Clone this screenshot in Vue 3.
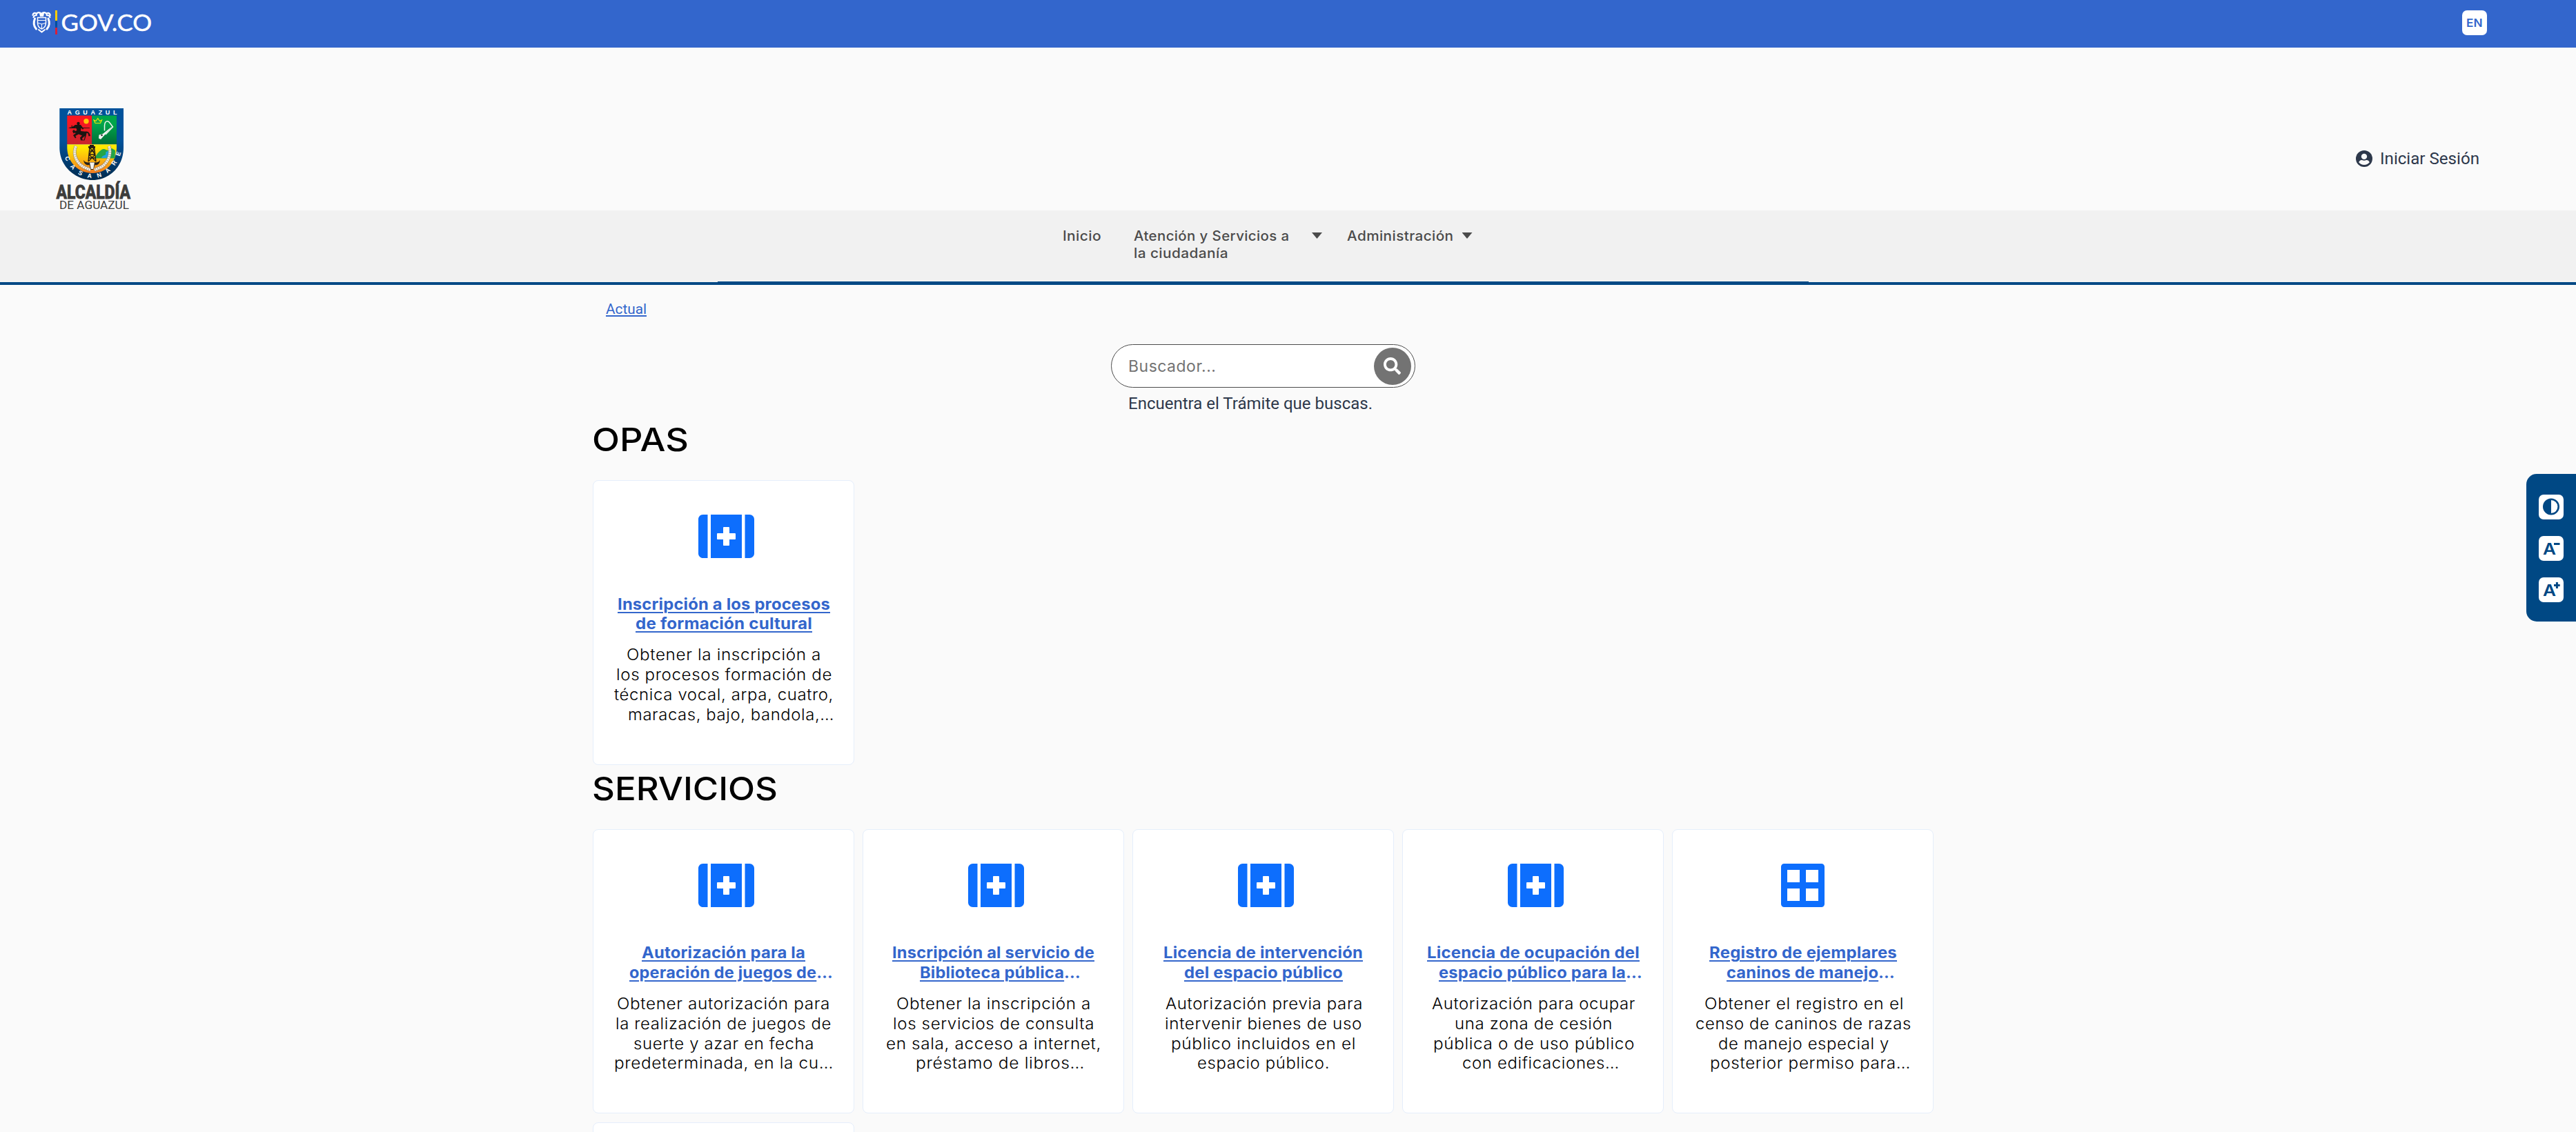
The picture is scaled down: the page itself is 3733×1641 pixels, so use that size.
<script setup>
// Stretches a line of text so that it spans the given width.
const vFit = {
  mounted(el, { value }) {
    el.style.display = 'inline-block'
    const natural = el.getBoundingClientRect().width
    el.style.transformOrigin = 'left'
    el.style.transform = `scaleX(${value / natural})`
  }
}

// Each line: [text, left offset inside the card, width, is truncated]
const opas = [
  {
    icon: 'aid',
    shift: 3.5,
    title: [['Inscripción a los procesos', 34.5, 308], ['de formación cultural', 60.500, 256]],
    body: [
      ['Obtener la inscripción a', 47.7, 282],
      ['los procesos formación de', 32.3, 313],
      ['técnica vocal, arpa, cuatro,', 30.2, 318],
      ['maracas, bajo, bandola,…', 49.3, 299]
    ]
  }
]

const servicios = [
  {
    icon: 'aid',
    shift: 3.5,
    title: [['Autorización para la', 70, 237], ['operación de juegos de', 51.5, 295, true]],
    body: [
      ['Obtener autorización para', 34, 309],
      ['la realización de juegos de', 32, 313],
      ['suerte y azar en fecha', 57.5, 262],
      ['predeterminada, en la cu…', 29.5, 318]
    ]
  },
  {
    icon: 'aid',
    shift: 3.5,
    title: [['Inscripción al servicio de', 41.8, 293], ['Biblioteca pública', 81.6, 233, true]],
    body: [
      ['Obtener la inscripción a', 47.5, 282],
      ['los servicios de consulta', 42.8, 292],
      ['en sala, acceso a internet,', 33, 312],
      ['préstamo de libros…', 76, 245]
    ]
  },
  {
    icon: 'aid',
    shift: 3.5,
    title: [['Licencia de intervención', 44, 289], ['del espacio público', 73.5, 230]],
    body: [
      ['Autorización previa para', 46.4, 286],
      ['intervenir bienes de uso', 45.6, 286],
      ['público incluidos en el', 54.8, 268],
      ['espacio público.', 92.5, 192]
    ]
  },
  {
    icon: 'aid',
    shift: 3.5,
    title: [['Licencia de ocupación del', 35.2, 308], ['espacio público para la', 51.5, 295, true]],
    body: [
      ['Autorización para ocupar', 42, 295],
      ['una zona de cesión', 74.5, 229],
      ['pública o de uso público', 43.4, 292],
      ['con edificaciones…', 85.5, 228]
    ]
  },
  {
    icon: 'grid',
    shift: 0,
    title: [['Registro de ejemplares', 53.2, 272], ['caninos de manejo', 77.3, 244, true]],
    body: [
      ['Obtener el registro en el', 45.4, 289],
      ['censo de caninos de razas', 32.9, 313],
      ['de manejo especial y', 65.6, 248],
      ['posterior permiso para…', 54, 291]
    ]
  }
]

const sections = [
  { name: 'OPAS', width: 140, cards: opas },
  { name: 'SERVICIOS', width: 269, cards: servicios }
]
</script>

<template>
  <div class="page">
    <div class="govbar">
      <svg class="gov" width="180" height="44" viewBox="45 12 180 44">
        <g fill="none" stroke="#fff" stroke-width="2.2" stroke-linecap="round">
          <path d="M60 20C57 17 54 18 53 20C50 18 48 19 47.500 22M60 20C63 17 66 18 67.500 20C70 18 72 19 72.800 22" />
          <path d="M53 22C51 22 49 23 48.500 25M67.500 22C70 22 72 23 72.400 25" />
          <path d="M50.500 27C48 33 49 38 52.500 42M70 27C72.500 33 71.500 38 68 42" stroke-width="3" />
          <path d="M54.500 25.500H66.500V33C66.500 38 63 41 60.500 42C57.500 41 54.500 38 54.500 33Z" stroke-width="1.500" />
          <path d="M55 29.500H66M55.500 33.500L60.500 35L66 33.500M60.500 35V41" stroke-width="1" />
          <path d="M56 43L60.500 46.500L65 43" stroke-width="2" />
        </g>
        <path d="M57 19H64L63 24H58Z" fill="#fff" />
        <path d="M80 15h3v15h-3z" fill="#ffcd00" />
        <path d="M80 30h3v10h-3z" fill="#004f9f" />
        <path d="M80 40h3v10h-3z" fill="#d6203c" />
        <text x="88.500" y="44.500" font-family="Lato, sans-serif" font-weight="400" font-size="33.500" fill="#fff" stroke="#fff" stroke-width=".5" textLength="131.500" lengthAdjust="spacingAndGlyphs">GOV.CO</text>
      </svg>
      <button class="lang"><span v-fit="23.5">EN</span></button>
    </div>

    <header class="head">
      <svg class="crest" width="120" height="165" viewBox="80 150 120 165">
        <defs>
          <linearGradient id="rim" x1="0" y1="0" x2="0" y2="1"><stop offset=".45" stop-color="#00529b" /><stop offset="1" stop-color="#002b4e" /></linearGradient>
          <linearGradient id="red" x1="0" y1="0" x2="0" y2="1"><stop offset=".2" stop-color="#fb1720" /><stop offset="1" stop-color="#c8262e" /></linearGradient>
          <linearGradient id="green" x1="0" y1="0" x2="0" y2="1"><stop offset=".3" stop-color="#00a54b" /><stop offset="1" stop-color="#006c36" /></linearGradient>
          <linearGradient id="gold" x1="0" y1="0" x2="0" y2="1"><stop offset=".1" stop-color="#ffe900" /><stop offset="1" stop-color="#f47b20" /></linearGradient>
          <path id="arc" d="M91.500 220.500C96 242 114 258.300 134 258.300S171 242 176.500 216" />
        </defs>
        <path d="M86.300 157H179V214C179 242 158 261 134 261S86.300 242 86.300 214Z" fill="url(#rim)" />
        <path d="M97.300 167.500H133.300V209.500H97.300Z" fill="url(#red)" />
        <path d="M133.300 167.500H169V209.500H133.300Z" fill="url(#green)" />
        <path d="M97.300 209.500H169V215C168 237 153 251 134 251S98 237 97.300 215Z" fill="url(#gold)" />
        <path d="M97.300 209.500H169" stroke="#f5d34a" stroke-width=".6" />
        <circle cx="125" cy="175.700" r="3.700" fill="#ffc60b" />
        <g fill="#1b1512">
          <circle cx="113.500" cy="179" r="2.200" />
          <path d="M109 181L105 184L104.600 181.500L103.500 182L104 186L110 184.500L111.500 189L109 190L107 188L105 190L106.500 193.500L108 192.500L110 193L106 196L109 200.500L110.500 199.500L109.300 197L114 194.500L119 196.500L116 199.500L117 203.500H120L119 200.500L123 197L122 202L119.500 203.500H122.500L124.500 197.500L125.500 193C128 192 128 196 128.500 197.500L131 197C130 193 128 189.800 123.500 190.700L117 190L117.500 185L120 188L121 186.500L117 181Z" />
          <path d="M99 185.300L102 184.600L130 185.200V186L102 186Z" />
        </g>
        <path d="M136 174L138 178.500H145.500L147.500 174L144.500 175.500L141.800 171.500L139 175.500Z" fill="none" stroke="#e9e50c" stroke-width="1.200" />
        <path d="M151.500 189.500V182C152 174 157 175 159 178L163.500 184L153 195" fill="none" stroke="#f1f4f1" stroke-width="1.500" />
        <path d="M163 183L146 202L143 200.500L143.500 195.500L149 194L159 186Z" fill="#f4f5f3" />
        <circle cx="147.500" cy="196" r="1.300" fill="#29352d" />
        <path d="M137 229.500C140 223 147 215 151 216L156 218L162 215L167 218L166.500 229.500Z" fill="#21a548" />
        <path d="M147 229C149 223 155 227 153 221L157 218C156 222 160 224 157 229Z" fill="#1fa3de" />
        <path d="M129 214H137M129.500 219H137M129 224H138M128.500 229H138.500M130 213L128 234M136.500 213L139 234M130 214L138 224M137 214L129 224M129 224L139 234M138 224L128 234" stroke="#241b13" stroke-width="1.400" fill="none" />
        <path d="M130 210H136V212H138V214.500H128V212H130Z" fill="#241b13" />
        <path d="M110 212C105 224 111 236 121 242L131 246.300M158 212C162 224 156 236 147 242L137 246.300" fill="none" stroke="#77736b" stroke-width="4.800" stroke-dasharray="2.600 .5" />
        <path d="M110 212C105 224 111 236 121 242L131 246.300M158 212C162 224 156 236 147 242L137 246.300" fill="none" stroke="#eeebe3" stroke-width="3.800" stroke-dasharray="2.600 .5" />
        <path d="M121 232C124 237 129 235 133.500 235S142 237 145 232C144.500 238 141 240 137.500 239L135 246H131.500L129.500 239C125 240 122 238 121 232Z" fill="#28211a" />
        <path d="M130 235.500H137L135.200 245H131.800Z" fill="#f4f1ea" />
        <text x="97.500" y="165.600" font-family="'Liberation Sans', sans-serif" font-weight="700" font-size="9" fill="#fff" textLength="72">AGUAZUL</text>
        <text font-family="'Liberation Sans', sans-serif" font-weight="700" font-size="9" fill="#fff"><textPath href="#arc" textLength="113" startOffset="8">CASANARE</textPath></text>
        <text x="81.500" y="288" font-family="Roboto, sans-serif" font-weight="800" font-size="27" fill="#3c3c3b" stroke="#3c3c3b" stroke-width=".8" textLength="107.500" lengthAdjust="spacingAndGlyphs">ALCALDÍA</text>
        <text x="86" y="303" font-family="Roboto, sans-serif" font-size="16.500" fill="#3c3c3b" textLength="101" lengthAdjust="spacingAndGlyphs">DE AGUAZUL</text>
      </svg>
      <a class="login">
        <svg width="24" height="24" viewBox="0 0 24 24">
          <circle cx="12" cy="12" r="12" fill="#2d384b" />
          <circle cx="12" cy="8.900" r="4.200" fill="#fafafa" />
          <path d="M4.200 17.200C5.300 14.900 7 13.900 8.800 14.100C11 15 13 15 15.200 14.100C17 13.900 18.700 14.900 19.800 17.200C18 19.500 15.200 20.900 12 20.900S6 19.500 4.200 17.200Z" fill="#fafafa" />
        </svg>
        <span v-fit="144">Iniciar Sesión</span>
      </a>
    </header>

    <nav class="nav">
      <div class="menu">
        <span class="entry first"><span v-fit="56">Inicio</span></span>
        <span class="entry second">
          <span v-fit="225.5">Atención y Servicios a</span>
          <span v-fit="137">la ciudadanía</span>
        </span>
        <i class="caret"></i>
        <span class="entry third"><span v-fit="154.5">Administración</span></span>
        <i class="caret near"></i>
      </div>
      <div class="edge"></div>
    </nav>

    <main class="main">
      <a class="crumb" v-fit="59">Actual</a>
      <div class="search">
        <div class="pill">
          <span class="hint" v-fit="127.5">Buscador...</span>
          <span class="go">
            <svg width="25" height="25" viewBox="0 0 512 512">
              <path fill="#fff" d="M505 442.700L405.300 343c-4.500-4.500-10.600-7-17-7H372c27.600-35.300 44-79.700 44-128C416 93.100 322.900 0 208 0S0 93.100 0 208s93.100 208 208 208c48.300 0 92.700-16.400 128-44v16.300c0 6.400 2.500 12.500 7 17l99.700 99.700c9.400 9.400 24.600 9.400 33.900 0l28.300-28.300c9.400-9.400 9.400-24.600.1-34zM208 336c-70.700 0-128-57.200-128-128 0-70.700 57.200-128 128-128 70.700 0 128 57.200 128 128 0 70.700-57.200 128-128 128z" />
            </svg>
          </span>
        </div>
        <div class="caption"><span v-fit="354">Encuentra el Trámite que buscas.</span></div>
      </div>

      <section v-for="s in sections" :key="s.name" class="section">
        <h2><span v-fit="s.width">{{ s.name }}</span></h2>
        <div class="grid">
          <article v-for="(c, i) in s.cards" :key="i" class="card">
            <div class="glyph" :style="{ paddingLeft: c.shift * 2 + 'px' }">
              <svg v-if="c.icon === 'aid'" width="81" height="63" viewBox="0 0 576 448">
                <path fill="#0d6efd" fill-rule="evenodd" d="M0 48V400C0 426.500 21.500 448 48 448H96V0H48C21.500 0 0 21.500 0 48ZM528 0H480V448H528C554.500 448 576 426.500 576 400V48C576 21.500 554.500 0 528 0ZM128 448H448V0H128ZM192 200C192 195.600 195.600 192 200 192H256V136C256 131.600 259.600 128 264 128H312C316.400 128 320 131.600 320 136V192H376C380.400 192 384 195.600 384 200V248C384 252.400 380.400 256 376 256H320V312C320 316.400 316.400 320 312 320H264C259.600 320 256 316.400 256 312V256H200C195.600 256 192 252.400 192 248Z" />
              </svg>
              <svg v-else width="63" height="63" viewBox="0 0 448 448">
                <path fill="#0d6efd" fill-rule="evenodd" d="M416 0H32A32 32 0 0 0 0 32V416A32 32 0 0 0 32 448H416A32 32 0 0 0 448 416V32A32 32 0 0 0 416 0ZM192 64V192H64V64ZM384 64V192H256V64ZM192 256V384H64V256ZM384 256V384H256V256Z" />
              </svg>
            </div>
            <h3>
              <span v-for="l in c.title" :key="l[0]" class="line" :style="{ marginLeft: l[1] + 'px' }">
                <span v-fit="l[2]"><u>{{ l[0] }}</u><template v-if="l[3]">…</template></span>
              </span>
            </h3>
            <p>
              <span v-for="l in c.body" :key="l[0]" class="line" :style="{ marginLeft: l[1] + 'px' }">
                <span v-fit="l[2]">{{ l[0] }}</span>
              </span>
            </p>
          </article>
          <article v-if="s.name === 'SERVICIOS'" class="card"></article>
        </div>
      </section>
    </main>

    <aside class="tools">
      <button>
        <svg width="36" height="36" viewBox="0 0 36 36">
          <circle cx="18" cy="17.500" r="10.700" fill="none" stroke="#004884" stroke-width="2.600" />
          <path d="M18 7A10.500 10.500 0 0 0 18 28Z" fill="#004884" />
        </svg>
      </button>
      <button>
        <svg width="36" height="36" viewBox="0 0 36 36">
          <text x="6" y="27" class="letter" textLength="19" lengthAdjust="spacingAndGlyphs">A</text>
          <path d="M22 10h8.500v3H22z" fill="#004884" />
        </svg>
      </button>
      <button>
        <svg width="36" height="36" viewBox="0 0 36 36">
          <text x="6" y="27" class="letter" textLength="19" lengthAdjust="spacingAndGlyphs">A</text>
          <path d="M22 10h2.900V7h3v3h2.800v3h-2.800v3h-3v-3H22z" fill="#004884" />
        </svg>
      </button>
    </aside>
  </div>
</template>

<style>
body {
  background: #fafafa;
}
</style>

<style scoped>
.page {
  position: relative;
  height: 1641px;
  overflow: hidden;
  background: #fafafa;
  color: #000;
  font-family: Inter, sans-serif;
}
.page * {
  box-sizing: border-box;
}
button {
  border: 0;
  padding: 0;
}
.govbar {
  display: flex;
  justify-content: space-between;
  height: 69px;
  padding: 0 129px 0 45px;
  background: #36c;
}
.gov {
  margin-top: 12px;
}
.lang {
  width: 36px;
  height: 36px;
  margin-top: 15px;
  padding-left: 6px;
  border-radius: 7px;
  background: #fff;
  color: #36c;
  font: 600 15.500px/37px Inter, sans-serif;
  text-align: left;
}
.head {
  display: flex;
  justify-content: space-between;
  height: 236px;
  padding: 81px 140px 0 80px;
}
.crest {
  flex: none;
  overflow: visible;
}
.login {
  display: flex;
  gap: 11px;
  width: 179px;
  height: 28px;
  margin-top: 65.500px;
  color: #2d384b;
  font: 24px/28px Roboto, sans-serif;
  white-space: nowrap;
}
.login svg {
  flex: none;
  margin-top: 2px;
}
.nav {
  display: flex;
  flex-direction: column;
  justify-content: space-between;
  height: 108px;
  background: #f1f1f1;
  border-bottom: 4px solid #004884;
}
.menu {
  display: flex;
  padding: 24.500px 0 0 1539.500px;
  color: #4b4b4b;
  font-size: 20px;
  font-weight: 500;
  letter-spacing: 0.4px;
  line-height: 25px;
  white-space: nowrap;
}
.entry {
  display: flex;
  flex: none;
  flex-direction: column;
  align-items: flex-start;
}
.first {
  width: 103.500px;
}
.second {
  width: 258px;
}
.third {
  width: 166.500px;
}
.caret {
  width: 15px;
  height: 9px;
  margin: 7.500px 36px 0 0;
  background: #4b4b4b;
  clip-path: polygon(0 0, 100% 0, 50% 100%);
}
.near {
  margin-right: 0;
}
.edge {
  width: 1581px;
  height: 1px;
  margin-left: 1040px;
  background: #004884;
}
.main {
  display: flex;
  flex-direction: column;
  align-items: flex-start;
  padding-left: 859.300px;
}
.crumb {
  margin: 23px 0 0 18.700px;
  color: #36c;
  font: 20.800px/25px Roboto, sans-serif;
  text-decoration: underline;
  text-decoration-thickness: 2px;
  text-underline-offset: 2px;
  white-space: nowrap;
}
.search {
  width: 441px;
  margin: 38px 0 0 750.700px;
}
.pill {
  display: flex;
  justify-content: space-between;
  height: 63px;
  padding: 4px 5px 0 24.500px;
  border: 1px solid #4b4b4b;
  border-radius: 32px;
  background: #fff;
}
.hint {
  color: #737373;
  font-size: 22.500px;
  letter-spacing: 0.5px;
  line-height: 54px;
}
.go {
  display: flex;
  width: 54px;
  height: 54px;
  padding: 14px 0 0 14px;
  border-radius: 50%;
  background: #737373;
}
.caption {
  margin: 8.500px 0 0 25px;
  height: 29px;
  color: #2d384b;
  font: 24px/29px Roboto, sans-serif;
  white-space: nowrap;
}
.section h2 {
  height: 60px;
  margin: 4px 0 29px -1px;
  font-size: 47px;
  font-weight: 550;
  line-height: 60px;
  white-space: nowrap;
}
.section:first-of-type h2 {
  margin-top: 7.500px;
}
.grid {
  display: grid;
  grid-template-columns: repeat(5, 379px);
  grid-auto-rows: 412.500px;
  gap: 13px 12px;
}
.card {
  border: 1px solid #e5eefb;
  border-radius: 8px;
  background: #fff;
}
.glyph {
  display: flex;
  justify-content: center;
  height: 115.500px;
  margin-top: 49px;
}
h3,
p {
  margin: 0;
  font-size: 22.800px;
  font-weight: 360;
  letter-spacing: 0.6px;
  line-height: 28.800px;
}
h3 {
  margin-bottom: 16.400px;
  color: #36c;
  font-weight: 680;
  letter-spacing: 0.2px;
}
h3 u {
  text-decoration-thickness: 1.500px;
  text-underline-offset: 3px;
}
.line {
  display: block;
  height: 28.800px;
  white-space: nowrap;
}
.tools {
  position: absolute;
  top: 687px;
  right: 0;
  display: flex;
  flex-direction: column;
  gap: 24px;
  width: 72px;
  height: 214px;
  padding: 30px 0 0 18px;
  border-radius: 15px 0 0 15px;
  background: #004884;
}
.tools button {
  width: 36px;
  height: 36px;
  border-radius: 7px;
  background: #fff;
}
.tools svg {
  display: block;
}
.letter {
  fill: #004884;
  font: 600 23.500px Inter, sans-serif;
}
</style>
